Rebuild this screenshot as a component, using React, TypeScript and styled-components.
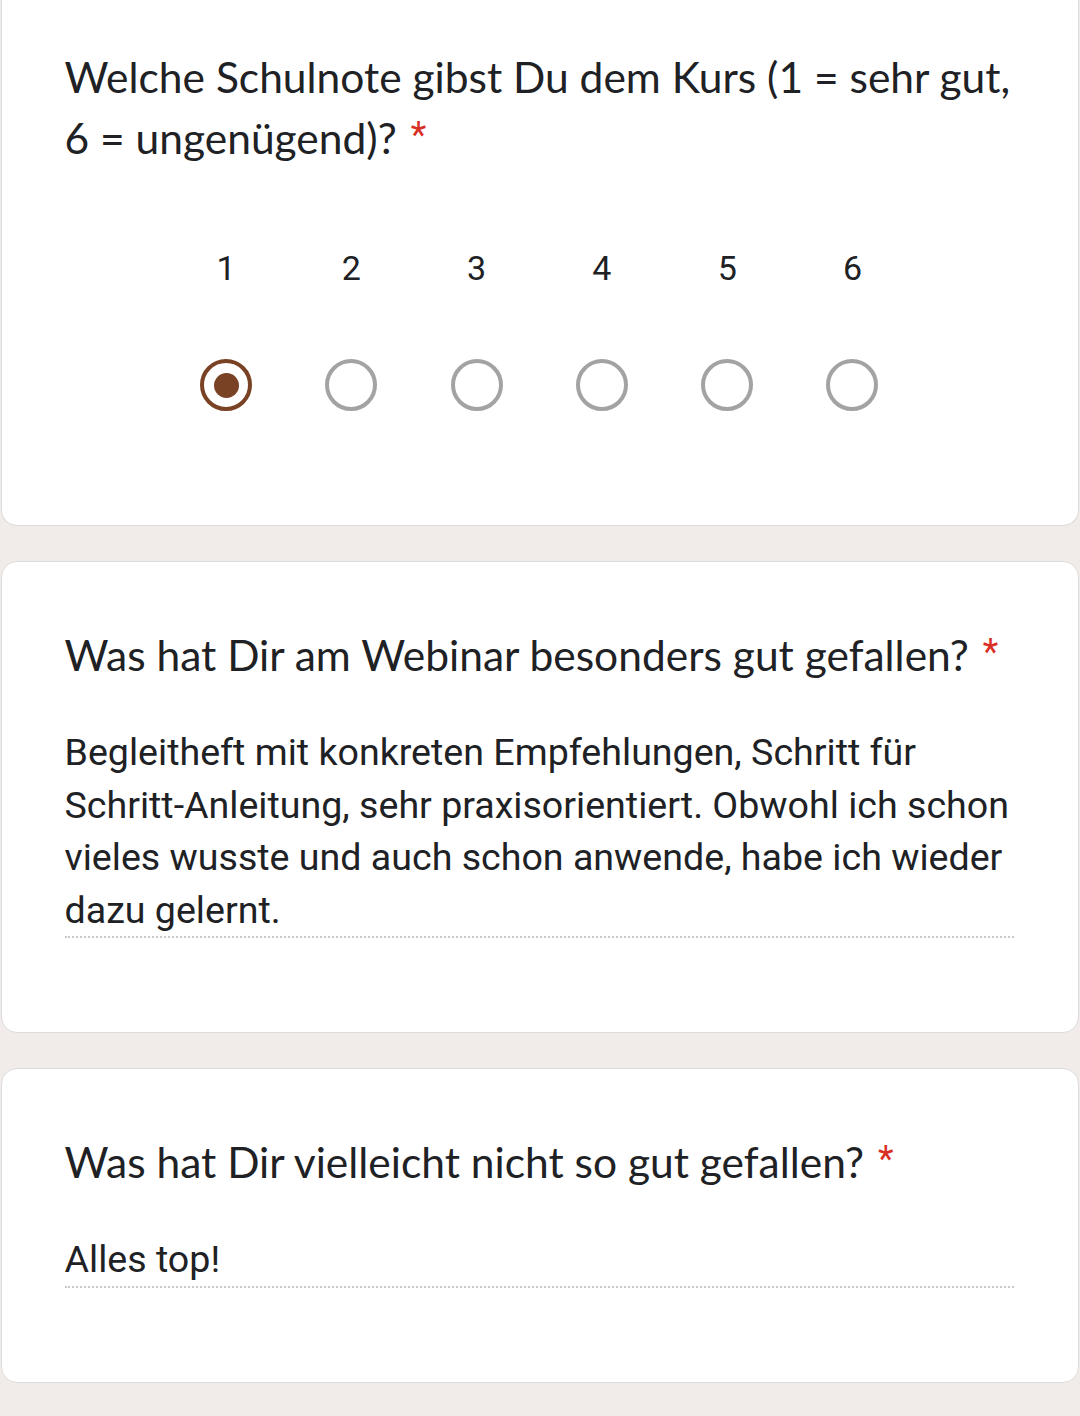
import React from 'react';
import styled, { createGlobalStyle } from 'styled-components';

const GRADES = [1, 2, 3, 4, 5, 6];

const GlobalStyle = createGlobalStyle`
  html, body {
    margin: 0;
    padding: 0;
    background: #f1ece9;
  }
  body {
    font-family: Roboto, "Liberation Sans", sans-serif;
    color: #202124;
  }
`;

const Page = styled.main`
  display: flex;
  flex-direction: column;
  gap: 35px;
  padding: 0 1px 32px 1px;
  min-height: 1416px;
  box-sizing: border-box;
`;

const Card = styled.section<{ $cut?: boolean }>`
  background: #fff;
  border: 1.5px solid #dcdcdc;
  border-radius: 16px;
  padding: ${(props) => (props.$cut ? '46px 64px 114px 62.5px' : '62px 64px 94px 62.5px')};
  ${(props) => props.$cut && `
    border-top: none;
    border-top-left-radius: 0;
    border-top-right-radius: 0;
  `}
`;

const Title = styled.h2`
  margin: 0;
  font-family: Lato, "Open Sans", sans-serif;
  font-weight: 400;
  font-size: 42.5px;
  line-height: 61px;
  color: #202124;
`;

const Required = styled.span`
  font-family: Roboto, sans-serif;
  color: #d93025;
  font-size: 36px;
  line-height: 0;
  vertical-align: 7px;
  margin-left: 14px;
`;

const Scale = styled.div`
  display: grid;
  grid-template-columns: repeat(6, 125.3px);
  justify-content: center;
  row-gap: 71px;
  margin-top: 80px;
`;

const Number = styled.div`
  text-align: center;
  font-size: 34px;
  line-height: 40px;
`;

const RadioCell = styled.div`
  display: flex;
  justify-content: center;
`;

const Radio = styled.span<{ $checked?: boolean }>`
  position: relative;
  width: 52px;
  height: 52px;
  box-sizing: border-box;
  border-radius: 50%;
  border: 4.5px solid ${(props) => (props.$checked ? '#7a4225' : '#a3a3a3')};

  &::after {
    content: '';
    display: ${(props) => (props.$checked ? 'block' : 'none')};
    position: absolute;
    left: 50%;
    top: 50%;
    width: 25px;
    height: 25px;
    margin: -12.5px 0 0 -12.5px;
    border-radius: 50%;
    background: #7a4225;
  }
`;

const Answer = styled.div`
  margin-top: 41px;
  font-size: 37.6px;
  line-height: 52.5px;
  color: #202124;
  border-bottom: 2px dotted #c8c8c8;
`;

export default function App(): React.ReactElement {
  return (
    <>
      <GlobalStyle />
      <Page>
        <Card $cut>
          <Title>
            Welche Schulnote gibst Du dem Kurs (1 = sehr gut, 6 = ungenügend)?
            <Required>*</Required>
          </Title>
          <Scale>
            {GRADES.map((grade) => (
              <Number key={`n${grade}`}>{grade}</Number>
            ))}
            {GRADES.map((grade) => (
              <RadioCell key={`r${grade}`}>
                <Radio $checked={grade === 1} />
              </RadioCell>
            ))}
          </Scale>
        </Card>

        <Card>
          <Title>
            Was hat Dir am Webinar besonders gut gefallen?
            <Required>*</Required>
          </Title>
          <Answer>
            Begleitheft mit konkreten Empfehlungen, Schritt für Schritt-Anleitung, sehr
            praxisorientiert. Obwohl ich schon vieles wusste und auch schon anwende, habe ich
            wieder dazu gelernt.
          </Answer>
        </Card>

        <Card>
          <Title>
            Was hat Dir vielleicht nicht so gut gefallen?
            <Required>*</Required>
          </Title>
          <Answer>Alles top!</Answer>
        </Card>
      </Page>
    </>
  );
}
